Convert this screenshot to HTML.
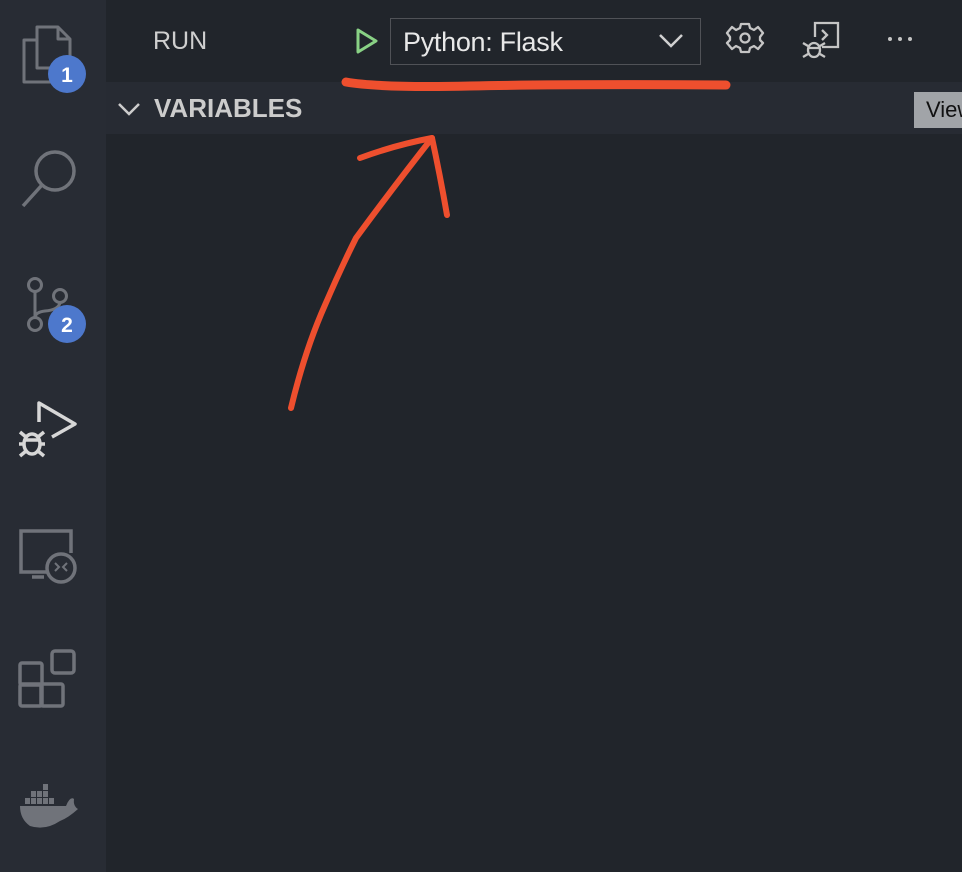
<!DOCTYPE html>
<html><head><style>
body{margin:0;width:962px;height:872px;overflow:hidden;background:#21252b;font-family:"Liberation Sans",sans-serif;position:relative}
.act{position:absolute;left:0;top:0;width:106px;height:872px;background:#282c34}
.hdr{position:absolute;left:106px;top:82px;width:856px;height:52px;background:#272b33}
.t{position:absolute;color:#d4d4d4;white-space:nowrap}
svg{position:absolute;left:0;top:0}
</style></head><body>
<div class="act"></div>
<div class="hdr"></div>
<div class="t" style="left:153px;top:27px;font-size:25px;color:#cfcfcf">RUN</div>
<div style="position:absolute;left:390px;top:18px;width:309px;height:45px;border:1.5px solid #505257;box-sizing:content-box"></div>
<div class="t" style="left:403px;top:27px;font-size:27px;color:#e8e8e8;letter-spacing:-0.3px">Python: Flask</div>
<div class="t" style="left:154px;top:93px;font-size:26px;font-weight:bold;color:#cccccc">VARIABLES</div>
<div style="position:absolute;left:914px;top:92px;width:60px;height:36px;background:#a1a4a8"></div>
<div class="t" style="left:926px;top:97px;font-size:22px;color:#111">View</div>
<svg width="962" height="872" viewBox="0 0 962 872" fill="none">
<g stroke="#70737a" stroke-width="3" stroke-linejoin="round">
<path d="M36 40 H24 V82 H52 V70"/>
<path d="M37 27 H58 L70 39 V68 H37 Z"/><path d="M58 27 V39 H70"/>
</g>
<circle cx="67" cy="74" r="19" fill="#4d78cc"/>
<text x="67" y="82" font-size="21" font-weight="bold" fill="#fff" text-anchor="middle" font-family="Liberation Sans">1</text>
<g stroke="#70737a" stroke-width="3.5"><circle cx="55" cy="171" r="19"/><path d="M42 185 L23 206"/></g>
<g stroke="#70737a" stroke-width="3"><circle cx="35" cy="285" r="6.5"/><circle cx="60" cy="296" r="6.5"/><circle cx="35" cy="324" r="6.5"/><path d="M35 292 V317"/><path d="M60 303 Q58 310 45 311 Q36 312 35 317"/></g>
<circle cx="67" cy="324" r="19" fill="#4d78cc"/>
<text x="67" y="332" font-size="21" font-weight="bold" fill="#fff" text-anchor="middle" font-family="Liberation Sans">2</text>
<g stroke="#d7d7d7" stroke-width="3.5" stroke-linejoin="round"><path d="M39 422 V403 L75 424 L52 437"/>
<ellipse cx="32" cy="444" rx="8" ry="10"/><path d="M24 440 H40 M20 432 L26 437 M44 432 L38 437 M19 444 H24 M40 444 H45 M20 456 L26 451 M44 456 L38 451"/></g>
<g stroke="#70737a" stroke-width="3.5"><path d="M47 572 H21 V531 H71 V553"/><path d="M32 577 H44"/><circle cx="61" cy="568" r="14"/><path d="M55 563 L59 567 L55 571 M67 563 L63 567 L67 571" stroke-width="2"/></g>
<g stroke="#70737a" stroke-width="3.5" stroke-linejoin="round"><rect x="20" y="663" width="22" height="22" rx="2"/><rect x="20" y="684" width="22" height="22" rx="2"/><rect x="41" y="684" width="22" height="22" rx="2"/><rect x="52" y="651" width="22" height="22" rx="3"/></g>
<g fill="#70737a"><path d="M20 806 H66 Q70 796 74 799 Q73 806 78 809 Q68 818 60 821 Q45 831 30 826 Q20 819 20 806Z"/>
<rect x="25" y="798" width="5" height="6"/><rect x="31" y="798" width="5" height="6"/><rect x="37" y="798" width="5" height="6"/><rect x="43" y="798" width="5" height="6"/><rect x="49" y="798" width="5" height="6"/><rect x="37" y="791" width="5" height="6"/><rect x="43" y="791" width="5" height="6"/><rect x="31" y="791" width="5" height="6"/><rect x="43" y="784" width="5" height="6"/></g>
<path d="M358 30 L376 41 L358 52 Z" stroke="#89d185" stroke-width="3" stroke-linejoin="round"/>
<path d="M660 35 L671 46 L682 35" stroke="#d0d0d0" stroke-width="2.5"/>
<g stroke="#c5c5c5" stroke-width="2.3"><circle cx="745" cy="38" r="4.5"/><path d="M741 24 H749 L750 28 L754 30 L758 27 L763 33 L760 37 V40 L763 43 L758 49 L754 46 L750 48 L749 52 H741 L740 48 L736 46 L732 49 L727 43 L730 40 V37 L727 33 L732 27 L736 30 L740 28 Z" stroke-linejoin="round"/></g>
<g stroke="#c5c5c5" stroke-width="2.3"><path d="M815 37 V23 H838 V47 H822"/><path d="M822 30 L827 35 L822 40"/><ellipse cx="814" cy="50" rx="6" ry="7"/><path d="M808 48 H820 M803 43 L808 46 M825 43 L820 46 M803 57 L808 54 M825 57 L820 54"/></g>
<g fill="#c5c5c5"><circle cx="890" cy="39" r="2"/><circle cx="900" cy="39" r="2"/><circle cx="910" cy="39" r="2"/></g>
<path d="M119 104 L129 114 L139 104" stroke="#cccccc" stroke-width="2.5"/>
<g stroke="#ee4f2e" stroke-linecap="round" stroke-linejoin="round" fill="none">
<path d="M346 82 Q380 88 470 86 Q560 84 726 85" stroke-width="9"/>
<path d="M291 408 Q305 350 325 305 Q340 270 356 238 Q395 185 432 138" stroke-width="6"/>
<path d="M360 158 Q395 145 432 138 Q440 175 447 215" stroke-width="6"/>
</g>
</svg>
</body></html>
